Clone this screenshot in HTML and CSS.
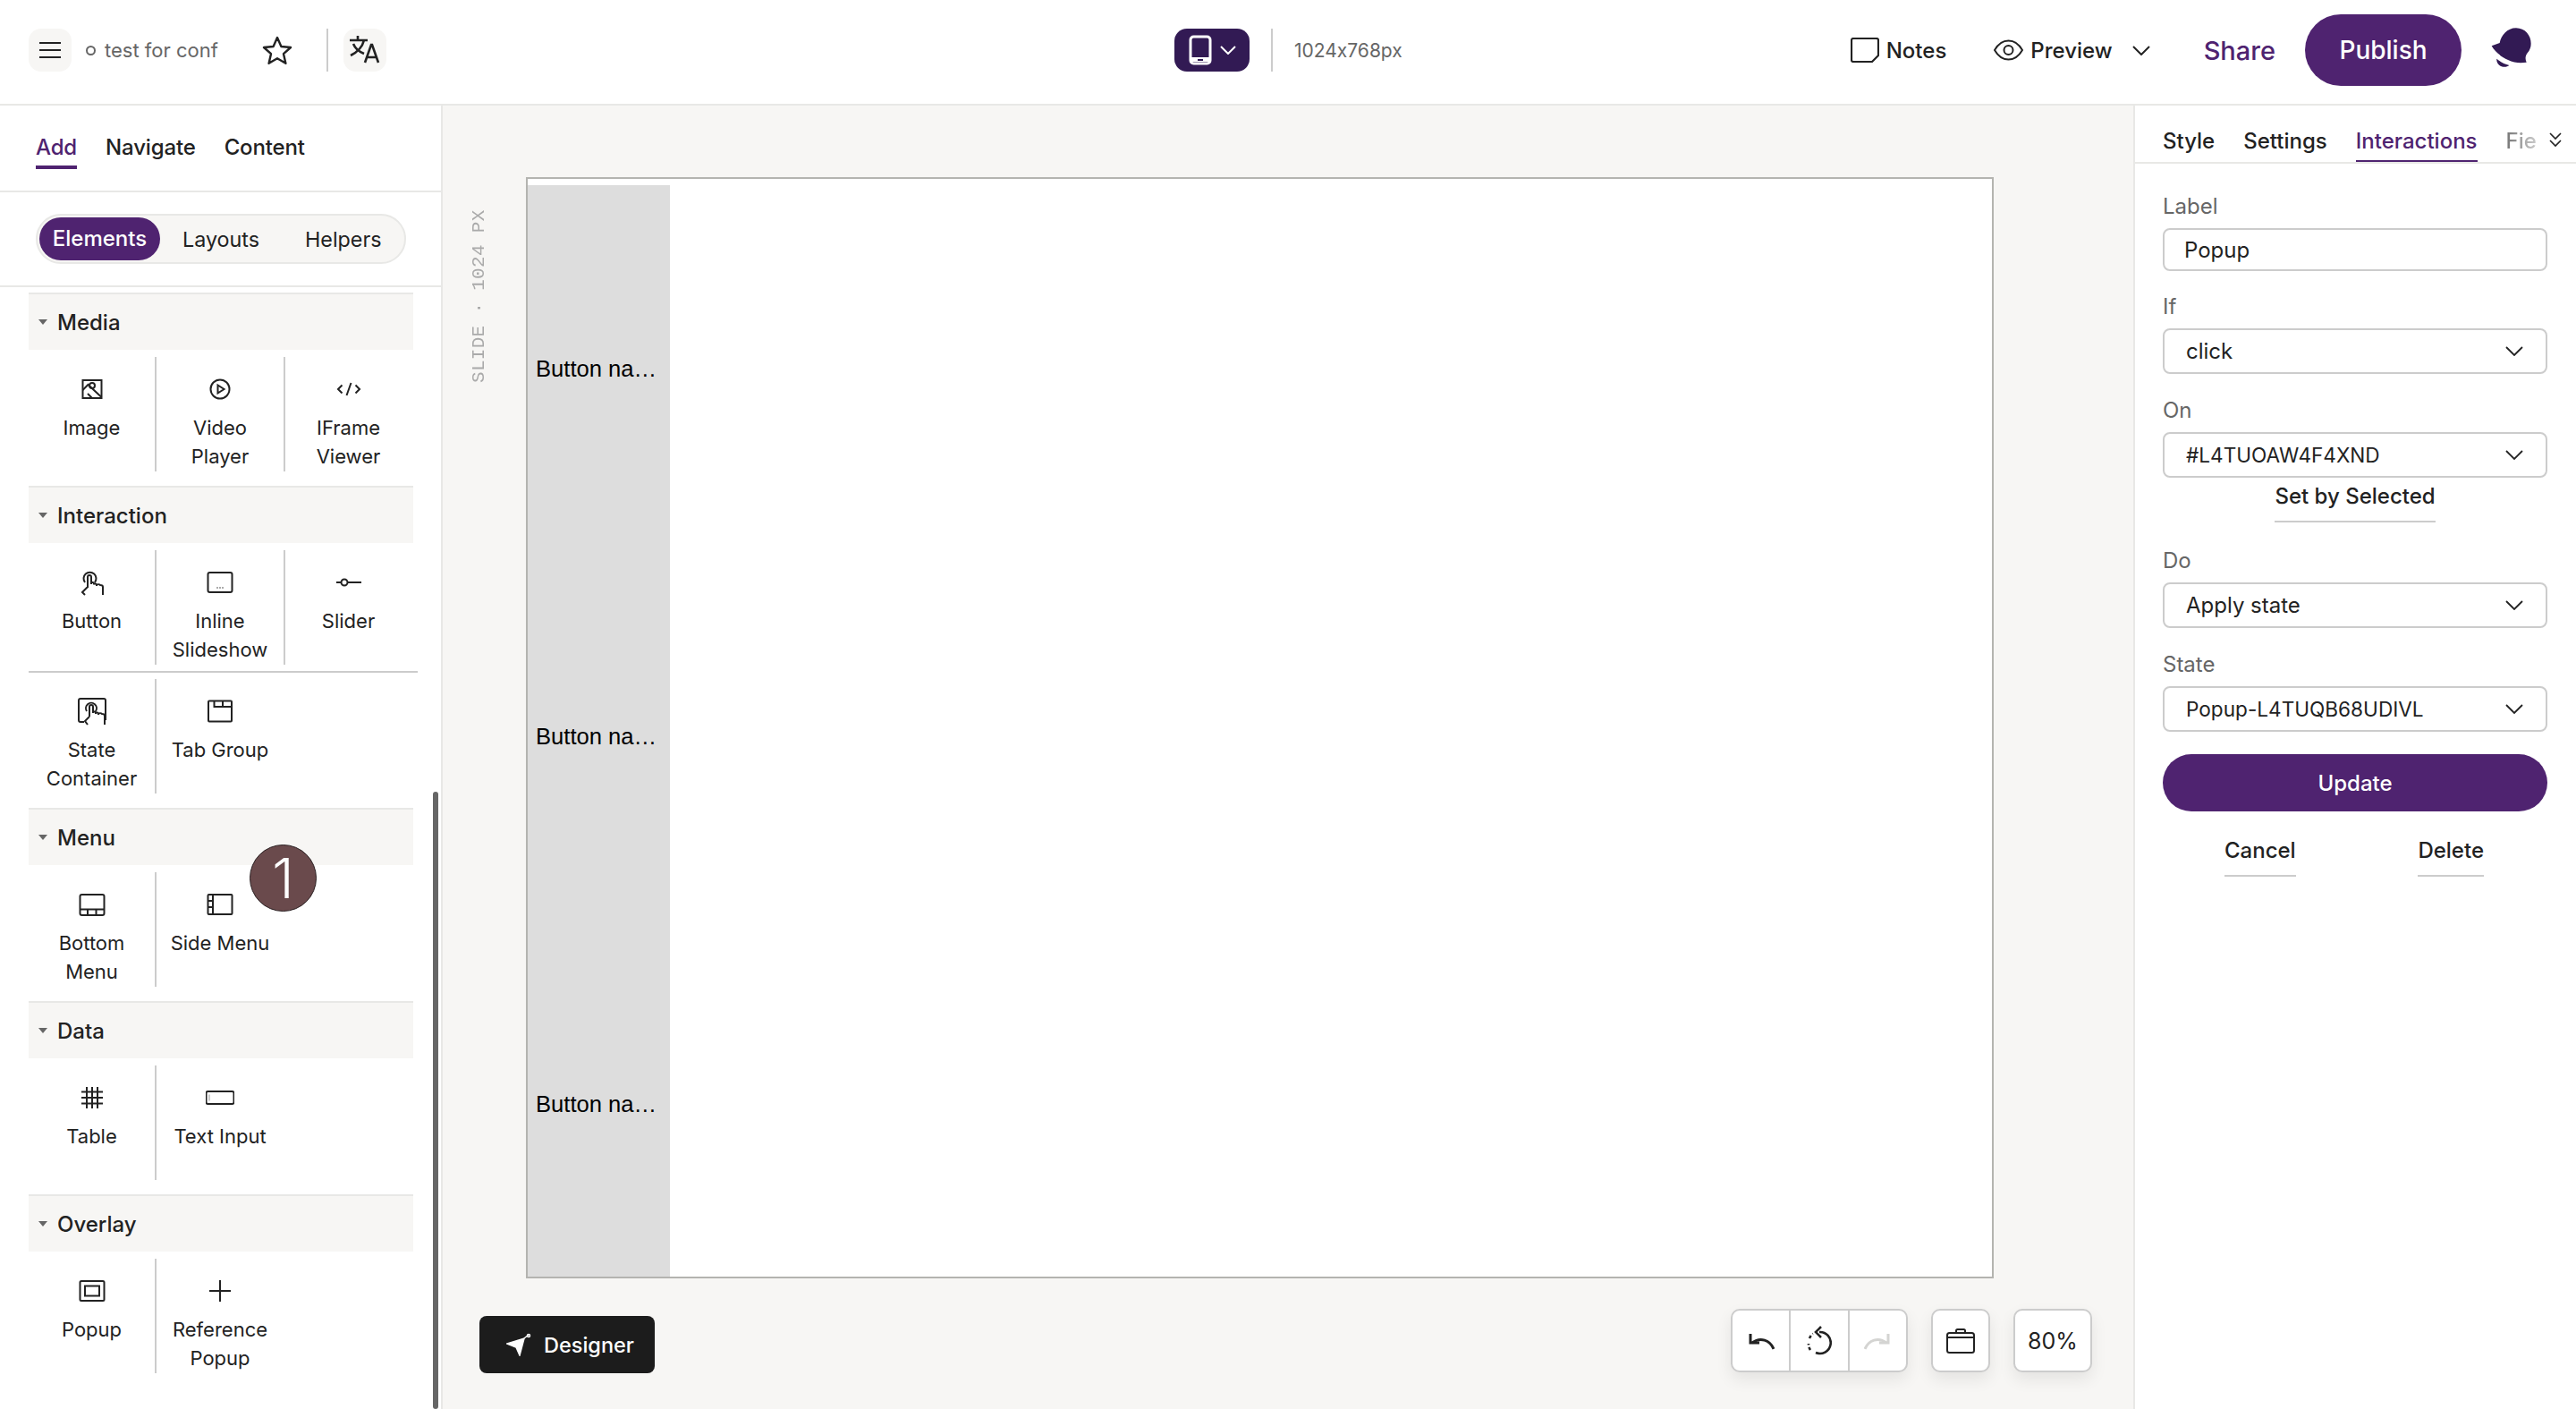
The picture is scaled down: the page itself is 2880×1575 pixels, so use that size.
FILE: index.html
```html
<!DOCTYPE html>
<html lang="en">
<head>
  <meta charset="UTF-8">
  <title>test for conf</title>
  <link rel="stylesheet" href="styles.css">
</head>
<body>
  <header class="topbar">
    <div class="top-left">
      <button class="soft-btn">
        <svg width="26" height="26" viewBox="0 0 26 26" fill="none" stroke="#222" stroke-width="2"><path d="M1 5h24M1 13h24M1 21h24"/></svg>
      </button>
      <span class="doc-dot"></span>
      <span class="doc-name">test for conf</span>
      <svg class="star" width="34" height="32" viewBox="0 0 34 32" fill="none" stroke="#222" stroke-width="2.4" stroke-linejoin="round"><path d="M17 2l4.4 10 10.6 1-8 7.200 2.400 10.600L17 25.300 7.600 30.800 10 20.200 2 13l10.600-1z"/></svg>
      <span class="vline"></span>
      <button class="soft-btn">
        <svg width="36" height="34" viewBox="0 0 36 34" fill="none" stroke="#222" stroke-width="2.600"><path d="M1 6h20M10 1v5M17 6c-2 8-7 13-15 17M5 10c2 5 7 9 12 11M18 31l7-20h1l7 20M21 25h9"/></svg>
      </button>
    </div>
    <div class="top-center">
      <button class="device-btn">
        <svg width="26" height="34" viewBox="0 0 26 34" fill="none" stroke="#fff" stroke-width="3"><rect x="2" y="2" width="22" height="30" rx="3.500"/><path d="M2 27.500h22" stroke-width="5"/><path d="M10 28h6" stroke="#321a54" stroke-width="2"/></svg>
        <svg width="18" height="10" viewBox="0 0 18 10" fill="none" stroke="#fff" stroke-width="2"><path d="M1 1l8 8 8-8"/></svg>
      </button>
      <span class="vline"></span>
      <span class="dims">1024x768px</span>
    </div>
    <div class="top-right">
      <span class="top-link notes">
        <svg width="32" height="28" viewBox="0 0 32 28" fill="none" stroke="#222" stroke-width="2.200" stroke-linejoin="round"><path d="M3 1h26a2 2 0 0 1 2 2v17l-7 7H3a2 2 0 0 1-2-2V3a2 2 0 0 1 2-2z"/></svg>
        Notes
      </span>
      <span class="top-link preview">
        <svg width="33" height="24" viewBox="0 0 33 24" fill="none" stroke="#222" stroke-width="2"><path d="M1 12c4-7 9-10.500 15.500-10.500S28 5 32 12c-4 7-9 10.500-15.500 10.500S5 19 1 12z"/><circle cx="16.500" cy="12" r="5"/></svg>
        Preview
        <svg class="caret" width="20" height="11" viewBox="0 0 20 11" fill="none" stroke="#222" stroke-width="2"><path d="M1 1l9 9 9-9"/></svg>
      </span>
      <span class="share">Share</span>
      <button class="publish">Publish</button>
      <svg class="avatar" width="50" height="50" viewBox="70 25 150 150" fill="#321a54"><path d="M78 95l27-10c5-25 25-50 55-50 30 0 50 25 50 52 0 12-4 22-12 32-6 8-9 18-3 31-20 3-42 2-62-8-25-12-45-28-55-47z"/><path d="M95 138c12 10 26 18 42 22-5 4-12 6-20 5-14-1-24-13-22-27z"/></svg>
    </div>
  </header>

  <main class="workspace">
    <aside class="left-panel">
      <nav class="left-tabs">
        <span class="tab active">Add</span>
        <span class="tab">Navigate</span>
        <span class="tab">Content</span>
      </nav>
      <div class="segment-row">
        <div class="segment">
          <span class="seg-item seg-on">Elements</span>
          <span class="seg-item seg-layouts">Layouts</span>
          <span class="seg-item seg-helpers">Helpers</span>
        </div>
      </div>
      <div class="palette">
        <section class="group">
          <h3 class="group-head"><i class="tri"></i>Media</h3>
          <div class="items">
            <div class="item">
              <svg class="ic" viewBox="0 0 32 32"><rect x="5.500" y="6" width="21" height="20"/><circle cx="16" cy="12" r="3"/><path d="M5.500 17l6-6 15 14M16 26l-5-5"/></svg>
              <span>Image</span>
            </div>
            <div class="item">
              <svg class="ic" viewBox="0 0 32 32"><circle cx="16" cy="16" r="10.500"/><path d="M13.500 11.500l7 4.500-7 4.500z"/></svg>
              <span>Video Player</span>
            </div>
            <div class="item">
              <svg class="ic" viewBox="0 0 32 32"><path d="M8.500 11.500L4 16l4.500 4.500M23.500 11.500L28 16l-4.500 4.500M18.500 9l-5 14"/></svg>
              <span>IFrame Viewer</span>
            </div>
          </div>
        </section>

        <section class="group">
          <h3 class="group-head"><i class="tri"></i>Interaction</h3>
          <div class="items">
            <div class="item">
              <svg class="ic" viewBox="0 0 32 32"><path d="M8 16a7 7 0 1 1 11 0M11 22V10a2 2 0 0 1 4 0v8M15 16.500c1-1 3-.5 3 1v1M18 18c1-1 3-.5 3 1v1M21 19c1-1 3-1 4 0 1 0 3 0 3 2v9M11 21l-6 6 3 3"/></svg>
              <span>Button</span>
            </div>
            <div class="item">
              <svg class="ic" viewBox="0 0 32 32"><rect x="2.500" y="5" width="27" height="22" rx="2"/><path class="dots" d="M12.500 22h1M15.500 22h1M18.500 22h1"/></svg>
              <span>Inline Slideshow</span>
            </div>
            <div class="item">
              <svg class="ic" viewBox="0 0 32 32"><circle cx="11" cy="16" r="3.500"/><path d="M2 16h5.500M14.500 16H30"/></svg>
              <span>Slider</span>
            </div>
          </div>
          <div class="items items-split">
            <div class="item">
              <svg class="ic" viewBox="0 0 32 32"><path d="M7 28H3a2 2 0 0 1-2-2V4a2 2 0 0 1 2-2h26a2 2 0 0 1 2 2v22"/><path d="M10 16a6 6 0 1 1 10 0M13 22V11a2 2 0 0 1 4 0v7M17 17c1-1 3-.5 3 1v1M20 18c1-1 3-.5 3 1v1M23 19c1-1 3-1 4 0 1 0 3 0 3 2v10M13 22l-5 5 3 4"/></svg>
              <span>State Container</span>
            </div>
            <div class="item">
              <svg class="ic" viewBox="0 0 32 32"><rect x="3" y="4.500" width="26" height="23" rx="1"/><path d="M9.500 4.500v6.500H28M19 4.500V11"/></svg>
              <span>Tab Group</span>
            </div>
          </div>
        </section>

        <section class="group">
          <h3 class="group-head"><i class="tri"></i>Menu</h3>
          <div class="items">
            <div class="item">
              <svg class="ic" viewBox="0 0 32 32"><rect x="2.500" y="5" width="27" height="23" rx="2"/><path d="M2.500 21.500h27M11 21.500V28M20.500 21.500V28"/></svg>
              <span>Bottom Menu</span>
            </div>
            <div class="item">
              <svg class="ic" viewBox="0 0 32 32"><rect x="2.500" y="5" width="27" height="22" rx="1"/><path d="M8 5v22M2.500 12h5.500M2.500 19h5.500"/></svg>
              <span>Side Menu</span>
            </div>
          </div>
        </section>

        <section class="group">
          <h3 class="group-head"><i class="tri"></i>Data</h3>
          <div class="items">
            <div class="item">
              <svg class="ic" viewBox="0 0 32 32"><path d="M4 9.500h24M4 16h24M4 22.500h24M10 4v24M16 4v24M22 4v24"/></svg>
              <span>Table</span>
            </div>
            <div class="item">
              <svg class="ic" viewBox="0 0 32 32"><rect x="0.500" y="9" width="31" height="14" rx="2"/><path class="thin" d="M4 12.500v7"/></svg>
              <span>Text Input</span>
            </div>
          </div>
        </section>

        <section class="group">
          <h3 class="group-head"><i class="tri"></i>Overlay</h3>
          <div class="items">
            <div class="item">
              <svg class="ic" viewBox="0 0 32 32"><rect x="2.500" y="5" width="27" height="22" rx="1.500"/><rect x="8" y="10.500" width="16" height="11"/></svg>
              <span>Popup</span>
            </div>
            <div class="item">
              <svg class="ic" viewBox="0 0 32 32"><path d="M4 16h24M16 4v24"/></svg>
              <span>Reference Popup</span>
            </div>
          </div>
        </section>
      </div>
      <div class="scroll-thumb"></div>
      <div class="step-badge">1</div>
    </aside>

    <section class="canvas">
      <div class="stage">
        <div class="slide-tag">SLIDE · 1024 PX</div>
        <div class="slide">
          <div class="slide-col">
            <div class="slide-btn">Button na…</div>
            <div class="slide-btn">Button na…</div>
            <div class="slide-btn">Button na…</div>
          </div>
        </div>
      </div>
      <div class="canvas-foot">
        <button class="designer">
          <svg width="28" height="26" viewBox="0 0 28 26" fill="#fff" stroke="#fff" stroke-width="1.500"><path d="M1 12L20 6l-5 19-4-9z"/><path d="M20 6l5-4" fill="none"/><circle cx="25" cy="3" r="1.500" fill="none"/></svg>
          Designer
        </button>
        <div class="tools">
          <div class="tool-box tool-group">
            <span class="tool">
              <svg width="30" height="22" viewBox="0 0 30 22" fill="none" stroke="#222" stroke-width="3"><path d="M29 20C25 10 14 6 5 13"/><path d="M3 3v10h10"/></svg>
            </span>
            <span class="tool">
              <svg width="28" height="34" viewBox="0 0 28 34" fill="none" stroke="#222" stroke-width="2.600"><path d="M14 7a12 12 0 1 1-4 23"/><path d="M4 27a12 12 0 0 1-2-7M3 14c1-2 2-4 4-5" stroke-dasharray="3.500 2.500"/><path d="M16 1l-6 6 6 6"/></svg>
            </span>
            <span class="tool">
              <svg width="30" height="22" viewBox="0 0 30 22" fill="none" stroke="#d4d4d2" stroke-width="3"><path d="M1 20C5 10 16 6 25 13"/><path d="M27 3v10H17"/></svg>
            </span>
          </div>
          <div class="tool-box tool-case">
            <svg width="32" height="28" viewBox="0 0 32 28" fill="none" stroke="#222" stroke-width="2"><rect x="1" y="5" width="30" height="22" rx="2.500"/><path d="M1 10h30M11 5V2.500A1.500 1.500 0 0 1 12.500 1h7A1.500 1.500 0 0 1 21 2.500V5"/></svg>
          </div>
          <div class="tool-box tool-zoom">80%</div>
        </div>
      </div>
    </section>

    <aside class="right-panel">
      <nav class="right-tabs">
        <span class="rtab">Style</span>
        <span class="rtab">Settings</span>
        <span class="rtab rtab-on">Interactions</span>
        <span class="rtab rtab-fade">Fie</span>
        <svg class="more" width="14" height="17" viewBox="0 0 14 17" fill="none" stroke="#222" stroke-width="1.600"><path d="M1 1l6 6 6-6M1 9l6 6 6-6"/></svg>
      </nav>
      <form class="props">
        <label class="field-label">Label</label>
        <div class="field field-input">Popup</div>
        <label class="field-label">If</label>
        <div class="field field-select">click
          <svg width="20" height="11" viewBox="0 0 20 11" fill="none" stroke="#222" stroke-width="1.800"><path d="M1 1l9 9 9-9"/></svg>
        </div>
        <label class="field-label">On</label>
        <div class="field field-select"><span class="caps">#L4TUOAW4F4XND</span>
          <svg width="20" height="11" viewBox="0 0 20 11" fill="none" stroke="#222" stroke-width="1.800"><path d="M1 1l9 9 9-9"/></svg>
        </div>
        <div class="link-row link-set"><span class="link-btn">Set by Selected</span></div>
        <label class="field-label">Do</label>
        <div class="field field-select">Apply state
          <svg width="20" height="11" viewBox="0 0 20 11" fill="none" stroke="#222" stroke-width="1.800"><path d="M1 1l9 9 9-9"/></svg>
        </div>
        <label class="field-label">State</label>
        <div class="field field-select"><span class="caps">Popup-L4TUQB68UDIVL</span>
          <svg width="20" height="11" viewBox="0 0 20 11" fill="none" stroke="#222" stroke-width="1.800"><path d="M1 1l9 9 9-9"/></svg>
        </div>
        <button type="button" class="update">Update</button>
        <div class="link-row link-actions">
          <span class="link-btn">Cancel</span>
          <span class="link-btn">Delete</span>
        </div>
      </form>
    </aside>
  </main>
</body>
</html>
```

FILE: styles.css
```css
* {
  box-sizing: border-box;
}

html, body {
  height: 100%;
}

body {
  margin: 0;
  display: flex;
  flex-direction: column;
  overflow: hidden;
  background: #fff;
  color: #222;
  font-family: Inter, "Noto Sans", sans-serif;
  font-size: 22px;
  font-feature-settings: "calt" 0;
}

button {
  font-family: inherit;
  font-feature-settings: inherit;
  border: none;
  padding: 0;
  cursor: pointer;
}

/* top bar */
.topbar {
  flex: 0 0 118px;
  display: flex;
  align-items: center;
  padding: 0 47px 4px 32px;
  border-bottom: 2px solid #e8e8e6;
}

.top-left {
  flex: 0 0 1281px;
  display: flex;
  align-items: center;
}

.soft-btn {
  width: 48px;
  height: 48px;
  display: flex;
  align-items: center;
  justify-content: center;
  background: #f7f6f4;
  border-radius: 14px;
}

.doc-dot {
  width: 11px;
  height: 11px;
  margin-left: 16px;
  border: 2px solid #666;
  border-radius: 50%;
}

.doc-name {
  margin-left: 10px;
  font-size: 22px;
  color: #666;
}

.star {
  margin-left: 49px;
}

.vline {
  width: 2px;
  height: 48px;
  background: #ccc;
}

.top-left .vline {
  margin: 0 17px 0 38px;
}

.top-center {
  display: flex;
  align-items: center;
}

.device-btn {
  width: 84px;
  height: 48px;
  display: flex;
  align-items: center;
  justify-content: center;
  gap: 9px;
  background: #321a54;
  border-radius: 14px;
}

.top-center .vline {
  margin-left: 24px;
}

.dims {
  margin-left: 24px;
  font-size: 21px;
  color: #666;
}

.top-right {
  margin-left: auto;
  display: flex;
  align-items: center;
}

.top-link {
  display: flex;
  align-items: center;
  gap: 8px;
  font-size: 24px;
  font-weight: 500;
}

.preview {
  margin-left: 53px;
}

.caret {
  margin-left: 14px;
}

.share {
  margin-left: 60px;
  font-size: 29px;
  font-weight: 500;
  color: #4f2370;
}

.publish {
  width: 175px;
  height: 80px;
  margin-left: 33px;
  background: #4f2370;
  color: #fff;
  border-radius: 40px;
  font-size: 28px;
  font-weight: 500;
}

.avatar {
  margin: 0 0 6px 31px;
}

/* three columns */
.workspace {
  flex: 1;
  min-height: 0;
  display: flex;
}

.left-panel {
  position: relative;
  flex: 0 0 495px;
  display: flex;
  flex-direction: column;
  overflow: hidden;
  border-right: 2px solid #e8e8e6;
}

.left-tabs {
  flex: 0 0 97px;
  display: flex;
  gap: 32px;
  padding: 32px 0 0 40px;
  border-bottom: 2px solid #e8e8e6;
}

.tab {
  height: 39px;
  font-size: 24px;
  font-weight: 500;
  letter-spacing: -0.15px;
}

.tab.active {
  color: #4f2370;
  border-bottom: 4px solid #4f2370;
}

.segment-row {
  flex: 0 0 106px;
  padding: 24px 0 0 40px;
  border-bottom: 2px solid #e8e8e6;
}

.segment {
  width: 414px;
  height: 56px;
  display: flex;
  align-items: center;
  padding: 0 2px;
  background: #f7f6f4;
  border: 2px solid #e8e8e6;
  border-radius: 28px;
}

.seg-item {
  font-size: 23.300px;
  font-weight: 400;
}

.seg-on {
  width: 135px;
  height: 48px;
  line-height: 48px;
  text-align: center;
  background: #4f2370;
  color: #fff;
  border-radius: 24px;
  font-size: 24px;
  font-weight: 500;
}

.seg-layouts {
  margin-left: 25px;
}

.seg-helpers {
  margin-left: 51px;
}

.palette {
  padding: 6px 0 0 32px;
}

.group {
  width: 430px;
  margin-bottom: 16px;
}

.group-head {
  height: 64px;
  margin: 0;
  display: flex;
  align-items: center;
  background: #f7f6f4;
  border-top: 2px solid #e8e8e6;
  font-size: 24px;
  font-weight: 500;
}

.tri {
  width: 0;
  height: 0;
  margin: 0 11px;
  border-left: 5px solid transparent;
  border-right: 5px solid transparent;
  border-top: 6px solid #666;
}

.items {
  display: grid;
  grid-template-columns: 143px 144px 143px;
  margin-top: 8px;
}

.items-split {
  width: 435px;
  margin-top: 7px;
  padding-top: 7px;
  border-top: 2px solid #ccc;
}

.item {
  height: 128px;
  display: flex;
  flex-direction: column;
  align-items: center;
  padding: 20px 14px 0;
  border-right: 2px solid #ccc;
  font-size: 22px;
  line-height: 32px;
  text-align: center;
}

.item:last-child {
  border-right: none;
  padding-right: 16px;
}

.ic {
  width: 32px;
  height: 32px;
  flex: none;
  margin-bottom: 11px;
  fill: none;
  stroke: #222;
  stroke-width: 2;
}

.ic .dots {
  stroke-width: 1.500;
}

.ic .thin {
  stroke: #999;
  stroke-width: 1;
}

.scroll-thumb {
  position: absolute;
  left: 484px;
  top: 767px;
  bottom: 0;
  width: 6px;
  background: #666;
  border-radius: 3px;
}

.step-badge {
  position: absolute;
  left: 279px;
  top: 826px;
  width: 75px;
  height: 75px;
  background: #6a4a4c;
  border: 1px solid #2a2022;
  border-radius: 50%;
  color: #fff;
  font-size: 62px;
  font-weight: 300;
  line-height: 73px;
  text-align: center;
}

/* canvas */
.canvas {
  flex: 1;
  min-width: 0;
  display: flex;
  flex-direction: column;
  background: #f7f6f4;
}

.stage {
  display: flex;
  padding-top: 80px;
}

.slide-tag {
  width: 93px;
  height: 193px;
  margin-top: 37px;
  padding-right: 29px;
  writing-mode: vertical-rl;
  transform: rotate(180deg);
  font-family: "Liberation Mono", monospace;
  font-size: 21px;
  letter-spacing: 0.300px;
  line-height: 24px;
  color: #aaa;
  text-align: right;
  white-space: nowrap;
}

.slide {
  width: 1641px;
  height: 1231px;
  overflow: hidden;
  padding-top: 7px;
  background: #fff;
  border: 2px solid #b4b4b0;
}

.slide-col {
  width: 159px;
}

.slide-btn {
  height: 411px;
  display: flex;
  align-items: center;
  padding: 0 9px;
  background: #ddd;
  color: #000;
  font-family: "Liberation Sans", Arial, sans-serif;
  font-size: 25.600px;
  white-space: nowrap;
}

.canvas-foot {
  display: flex;
  align-items: flex-start;
  justify-content: space-between;
  padding: 34px 46px 0 41px;
}

.designer {
  width: 196px;
  height: 64px;
  margin-top: 8px;
  display: flex;
  align-items: center;
  gap: 14px;
  padding-left: 30px;
  background: #1c1c1c;
  color: #fff;
  border-radius: 8px;
  font-size: 23.500px;
  font-weight: 500;
}

.tools {
  display: flex;
  gap: 26px;
}

.tool-box {
  height: 71px;
  display: flex;
  align-items: center;
  justify-content: center;
  background: #fff;
  border: 2px solid #ccc;
  border-radius: 10px;
  box-shadow: 0 8px 18px rgba(0, 0, 0, 0.08);
}

.tool-group {
  width: 198px;
}

.tool {
  flex: 1;
  height: 100%;
  display: flex;
  align-items: center;
  justify-content: center;
}

.tool + .tool {
  border-left: 2px solid #ccc;
}

.tool-case {
  width: 66px;
}

.tool-zoom {
  width: 88px;
  font-size: 25px;
}

/* right panel */
.right-panel {
  flex: 0 0 495px;
  border-left: 2px solid #e8e8e6;
}

.right-tabs {
  position: relative;
  height: 65px;
  display: flex;
  gap: 32px;
  padding: 25px 0 0 31px;
  overflow: hidden;
  border-bottom: 2px solid #e8e8e6;
}

.rtab {
  height: 40px;
  font-size: 24px;
  font-weight: 500;
}

.rtab-on {
  color: #4f2370;
  border-bottom: 4px solid #4f2370;
}

.rtab-fade {
  background: linear-gradient(90deg, #777, #ccc);
  -webkit-background-clip: text;
  background-clip: text;
  color: transparent;
}

.more {
  position: absolute;
  left: 463px;
  top: 30px;
}

.props {
  padding: 32px 32px 0 31px;
}

.field-label {
  display: block;
  height: 32px;
  margin-bottom: 8px;
  font-size: 24px;
  line-height: 32px;
  color: #666;
}

.field {
  height: 51px;
  display: flex;
  align-items: center;
  justify-content: space-between;
  padding: 0 25px 0 24px;
  background: #fff;
  border: 2px solid #ccc;
  border-radius: 8px;
  font-size: 24px;
}

.field-input {
  height: 48px;
  padding-left: 22px;
  margin-bottom: 24px;
}

.field-select {
  margin-bottom: 25px;
}

.field-select:has(+ .link-row) {
  margin-bottom: 0;
}

.caps {
  font-size: 22.600px;
}

.link-row {
  display: flex;
}

.link-set {
  justify-content: center;
  margin-bottom: 27px;
}

.link-btn {
  padding: 4px 0 10px;
  border-bottom: 2px solid #ccc;
  font-size: 24px;
  font-weight: 500;
  line-height: 34px;
}

.update {
  width: 100%;
  height: 64px;
  display: block;
  background: #4f2370;
  color: #fff;
  border-radius: 32px;
  font-size: 24px;
  font-weight: 500;
}

.link-actions {
  justify-content: space-between;
  margin-top: 23px;
  padding: 0 71px 0 69px;
}
```
